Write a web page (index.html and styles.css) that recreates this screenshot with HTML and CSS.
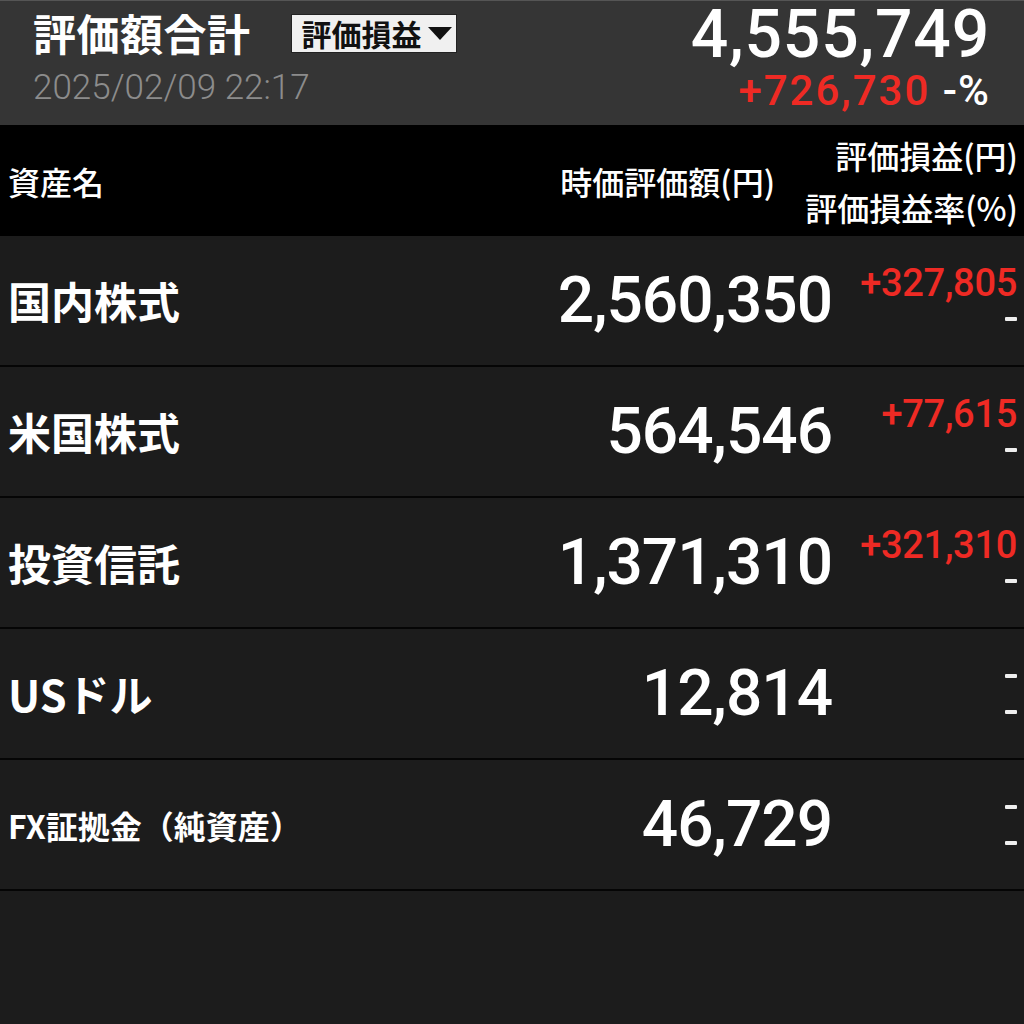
FILE: index.html
```html
<!DOCTYPE html>
<html lang="ja">
<head>
<meta charset="utf-8">
<link rel="stylesheet" href="styles.css">
</head>
<body>
<div class="summary">
  <div class="sum-left">
    <div class="title-row">
      <span class="title">評価額合計</span>
      <span class="dropdown">評価損益<svg class="tri" width="24" height="13" viewBox="0 0 24 13"><polygon points="0,0 24,0 12,13" fill="#111"/></svg></span>
    </div>
    <div class="date">2025/02/09 22:17</div>
  </div>
  <div class="sum-right">
    <div class="total">4,555,749</div>
    <div class="total-pl"><span class="red">+726,730</span> <span class="pct">-%</span></div>
  </div>
</div>

<div class="thead">
  <div class="th-name">資産名</div>
  <div class="th-value">時価評価額(円)</div>
  <div class="th-pl">
    <div>評価損益(円)</div>
    <div>評価損益率(%)</div>
  </div>
</div>

<div class="row">
  <div class="name">国内株式</div>
  <div class="value">2,560,350</div>
  <div class="pl"><div class="pl-amt red">+327,805</div><div class="dash"></div></div>
</div>
<div class="row">
  <div class="name">米国株式</div>
  <div class="value">564,546</div>
  <div class="pl"><div class="pl-amt red">+77,615</div><div class="dash"></div></div>
</div>
<div class="row">
  <div class="name">投資信託</div>
  <div class="value">1,371,310</div>
  <div class="pl"><div class="pl-amt red">+321,310</div><div class="dash"></div></div>
</div>
<div class="row">
  <div class="name">USドル</div>
  <div class="value">12,814</div>
  <div class="pl"><div class="pl-amt"><div class="dash"></div></div><div class="dash"></div></div>
</div>
<div class="row">
  <div class="name small">FX証拠金（純資産）</div>
  <div class="value">46,729</div>
  <div class="pl"><div class="pl-amt"><div class="dash"></div></div><div class="dash"></div></div>
</div>
</body>
</html>
```
FILE: styles.css
```css
html, body {
  margin: 0;
  padding: 0;
  background: #1c1c1c;
  color: #fff;
  font-family: "Noto Sans CJK JP", "Noto Sans", sans-serif;
}
.summary {
  height: 125px;
  box-sizing: border-box;
  background: #353535;
  border-top: 1px solid #555;
  display: flex;
  justify-content: space-between;
  padding: 0 34px 0 33px;
}
.sum-left {
  display: flex;
  flex-direction: column;
}
.title-row {
  display: flex;
  align-items: center;
  gap: 40px;
  height: 62px;
}
.title {
  font-size: 43px;
  font-weight: 700;
  line-height: 1;
  letter-spacing: 0.5px;
}
.dropdown {
  display: flex;
  align-items: center;
  box-sizing: border-box;
  width: 166px;
  height: 39px;
  background: #f0f0f0;
  border: 1px solid #222;
  color: #111;
  font-size: 30px;
  font-weight: 700;
  line-height: 1;
  padding-left: 10px;
  gap: 6px;
  margin-top: 2px;
}
.date {
  font-family: Roboto, sans-serif;
  font-weight: 300;
  font-size: 35px;
  color: #8c8c8c;
  line-height: 50px;
}
.sum-right {
  display: flex;
  flex-direction: column;
  align-items: flex-end;
}
.total {
  font-family: Roboto, sans-serif;
  font-weight: 500;
  font-size: 66px;
  letter-spacing: 0.8px;
  line-height: 68px;
}
.total-pl {
  font-family: Roboto, sans-serif;
  font-weight: 500;
  font-size: 42px;
  letter-spacing: 2px;
  line-height: 44px;
}
.red { color: #ee2a24; }
.pct { color: #fff; letter-spacing: 1px; }

.thead {
  height: 111px;
  background: #000;
  display: grid;
  grid-template-columns: 1fr auto auto;
  align-items: center;
  font-size: 32px;
  font-weight: 500;
  line-height: 1;
}
.th-name { padding-left: 8px; }
.th-value { margin-right: 30px; }
.th-pl {
  text-align: right;
  padding-right: 6px;
  line-height: 52px;
  white-space: nowrap;
}

.row {
  height: 129px;
  border-bottom: 2px solid #050505;
  display: grid;
  grid-template-columns: 1fr auto 192px;
  align-items: center;
}
.name {
  padding-left: 8px;
  font-size: 43px;
  font-weight: 700;
  line-height: 1;
}
.name.small { font-size: 32px; }
.value {
  font-family: Roboto, sans-serif;
  font-weight: 500;
  font-size: 64px;
  letter-spacing: -1px;
  line-height: 1;
}
.pl {
  align-self: stretch;
  display: flex;
  flex-direction: column;
  align-items: flex-end;
  padding-right: 7px;
  padding-top: 27px;
}
.pl-amt {
  font-family: Roboto, sans-serif;
  font-weight: 500;
  font-size: 38px;
  letter-spacing: -0.3px;
  line-height: 40px;
  height: 40px;
  display: flex;
  align-items: center;
}
.dash {
  width: 12px;
  height: 4px;
  background: #eee;
  margin-top: 14px;
  border-radius: 1px;
}
.pl-amt .dash { margin-top: 0; }
```
